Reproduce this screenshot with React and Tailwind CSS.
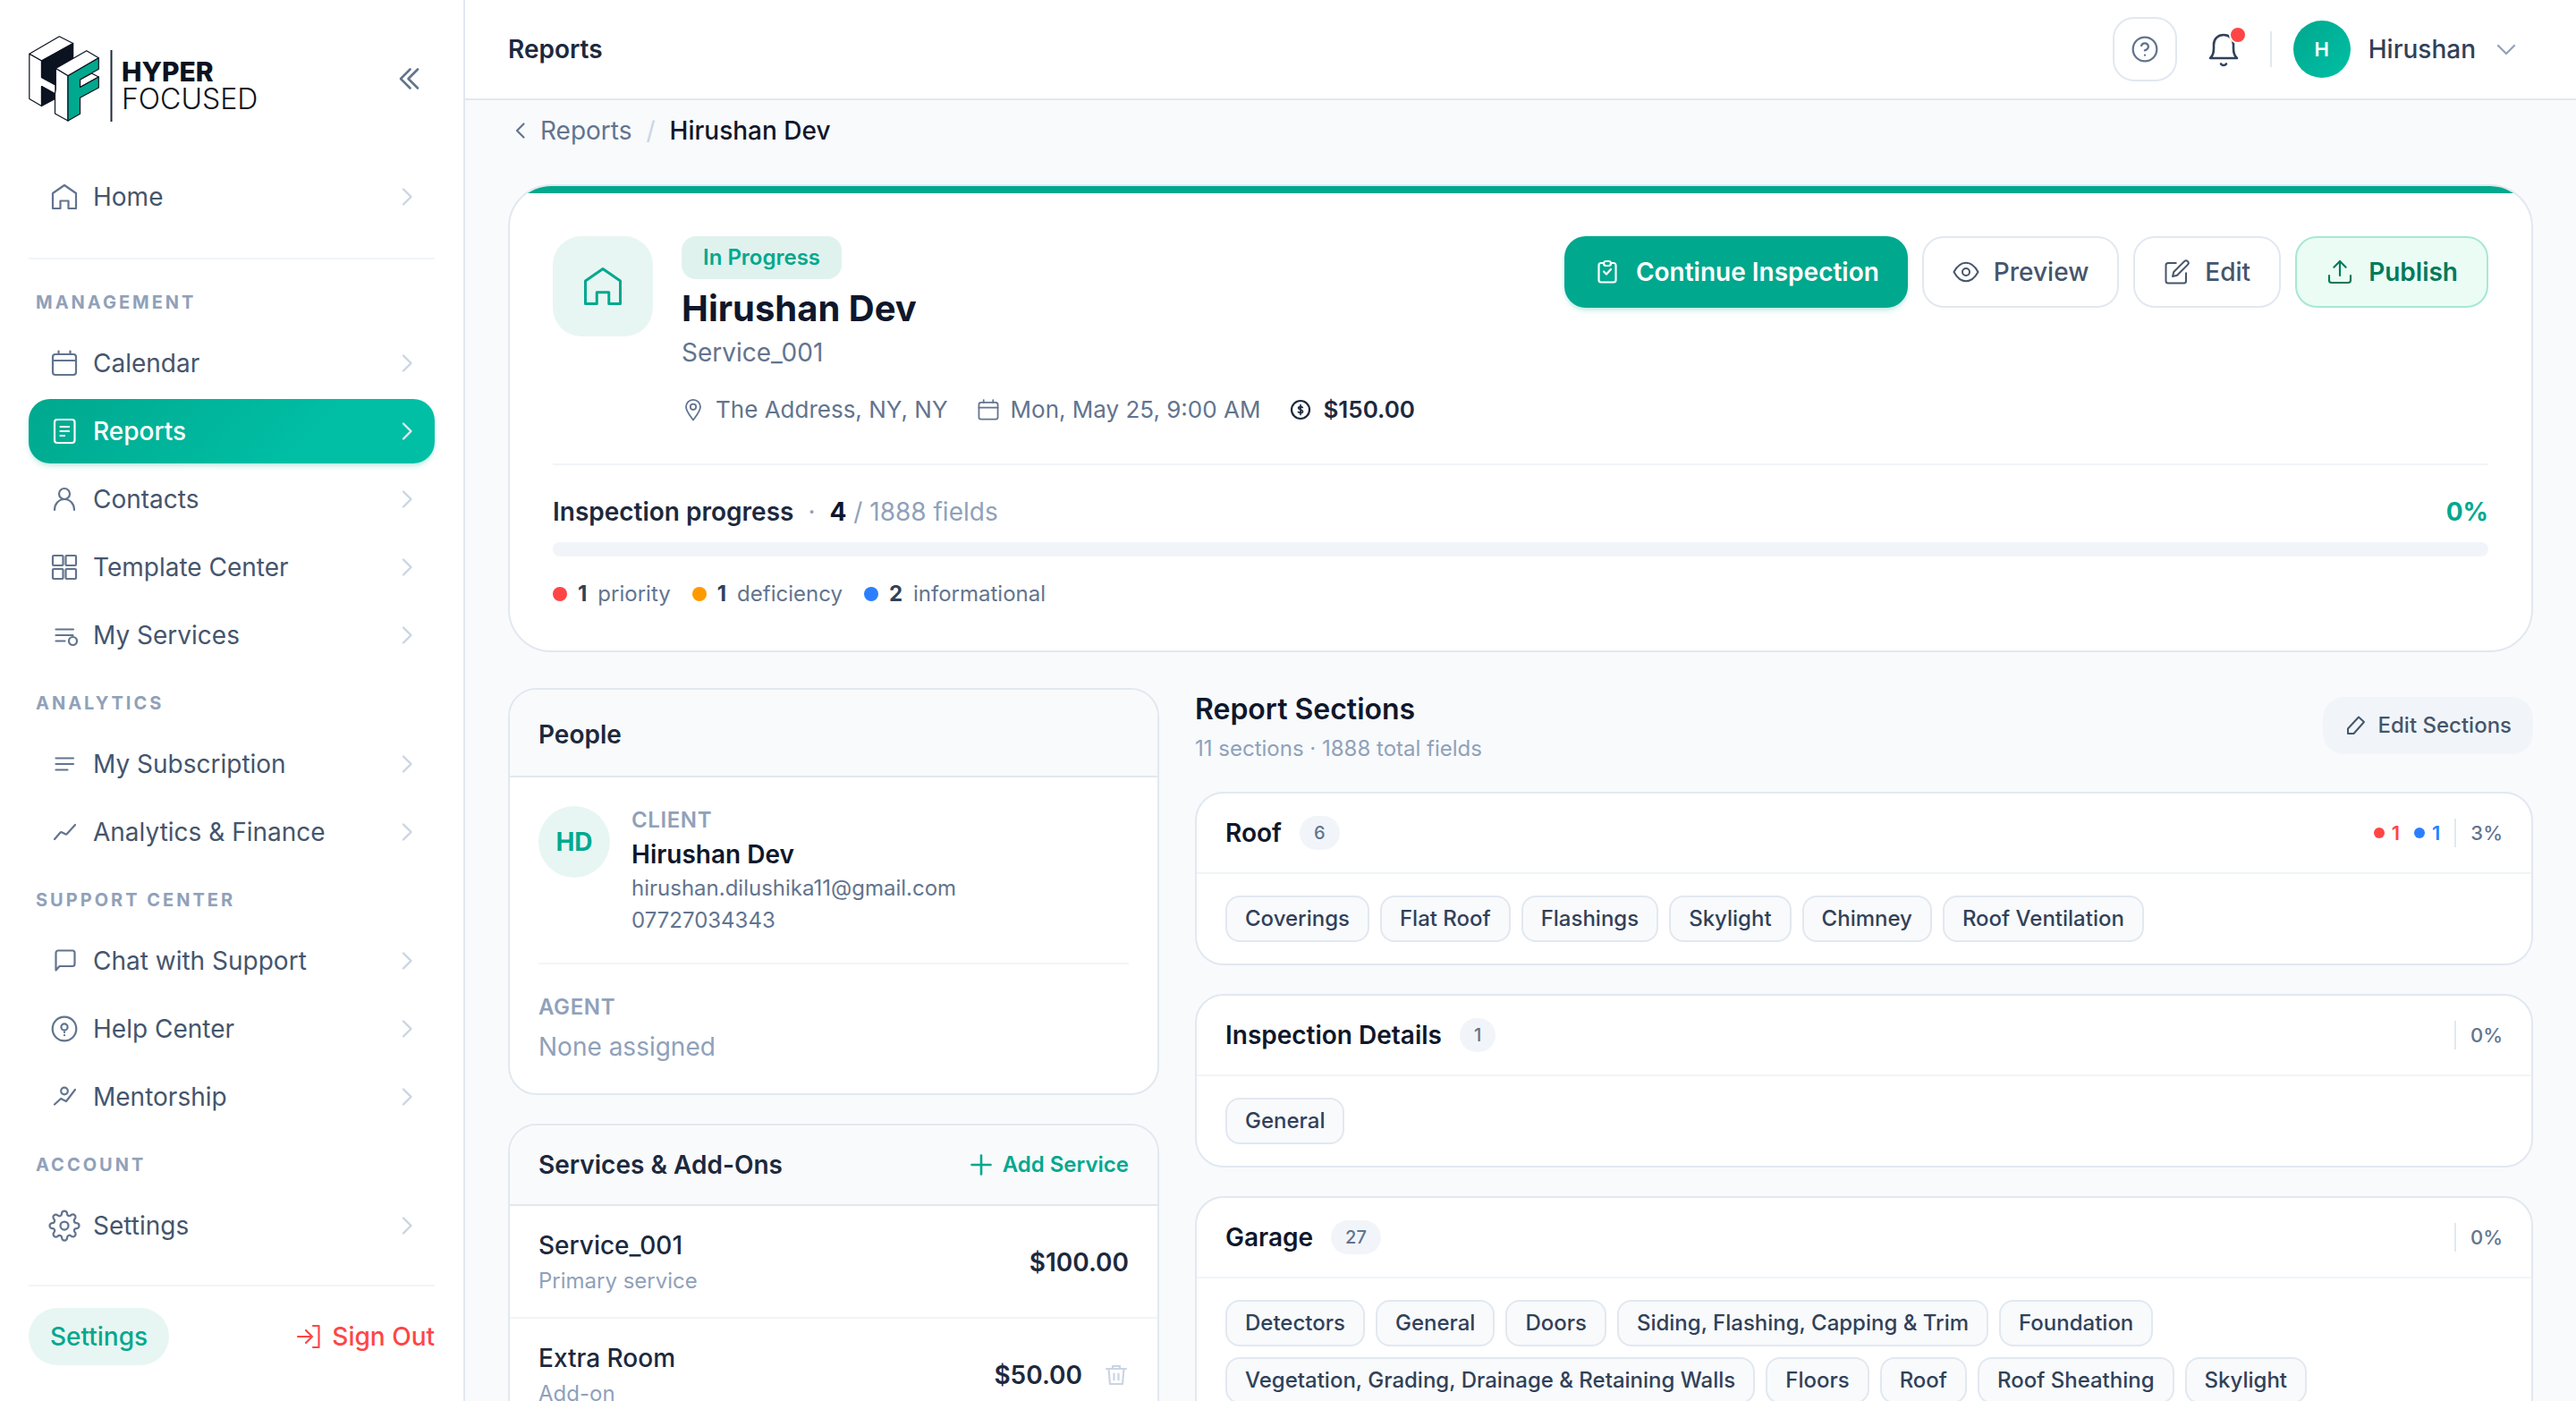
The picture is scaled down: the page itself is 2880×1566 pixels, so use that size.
// App.jsx
import React, { useState } from "react";
import { FiEdit, FiHelpCircle, FiSettings, FiUpload } from "react-icons/fi";

const Icon = ({ children, className = "size-8", box = 32, width = 2.2 }) => (
  <svg
    viewBox={`0 0 ${box} ${box}`}
    className={`shrink-0 ${className}`}
    fill="none"
    stroke="currentColor"
    strokeWidth={width}
    strokeLinecap="round"
    strokeLinejoin="round"
    aria-hidden="true"
  >
    {children}
  </svg>
);

const HomeIcon = ({ className, width }) => (
  <Icon className={className} width={width}>
    <path d="M3 12 16 3l13 9v17h-8.500v-8.500h-9V29H3z" />
  </Icon>
);

const CalendarIcon = ({ className }) => (
  <Icon className={className}>
    <rect x="3" y="6" width="26" height="23" rx="3" />
    <path d="M3 13h26M9.500 2.500V6M22.500 2.500V6" />
  </Icon>
);

const ReportIcon = () => (
  <Icon>
    <rect x="5" y="3" width="22.500" height="26" rx="3" />
    <path d="M11.500 11h9.500M11.500 16h9.500M11.500 21h4.500" />
  </Icon>
);

const ContactIcon = () => (
  <Icon>
    <circle cx="16" cy="10" r="6" />
    <path d="M5 28c0-6.500 4.500-12 11-12s11 5.500 11 12" />
  </Icon>
);

const TemplateIcon = () => (
  <Icon>
    <rect x="3" y="3" width="11.500" height="11" rx="1" />
    <rect x="17.500" y="3" width="11.500" height="11" rx="1" />
    <rect x="3" y="18" width="11.500" height="11" rx="1" />
    <rect x="17.500" y="18" width="11.500" height="11" rx="1" />
  </Icon>
);

const ServicesIcon = () => (
  <Icon>
    <path d="M6.500 9.500h19.500M6.500 16h19M6.500 22.500h10" />
    <circle cx="25.500" cy="22.500" r="4.500" />
  </Icon>
);

const SubscriptionIcon = () => (
  <Icon>
    <path d="M6.500 9.500h19.500M6.500 16h19.500M6.500 22.500h13" />
  </Icon>
);

const AnalyticsIcon = () => (
  <Icon>
    <path d="M5 24l6.500-7.500c.5-.5 1-.6 1.500-.3l4.500 2.300c.5.2 1 .1 1.400-.4L28 8" />
  </Icon>
);

const ChatIcon = () => (
  <Icon>
    <path d="M6.500 26.500V7a2.500 2.500 0 0 1 2.500-2.500h16A2.500 2.500 0 0 1 27.500 7v12.500a2.500 2.500 0 0 1-2.500 2.500H10.500z" />
  </Icon>
);

const HelpIcon = () => (
  <Icon>
    <circle cx="16" cy="16" r="13.300" />
    <circle cx="16" cy="14" r="3.600" />
    <path d="M16 19.500v.5M16 23v.2" />
  </Icon>
);

const MentorIcon = () => (
  <Icon>
    <path d="M5 24.500l7-6.500 6 3 10-13" />
    <circle cx="16" cy="9.500" r="3.800" />
  </Icon>
);

const GearIcon = () => (
  <span className="flex size-8 shrink-0 items-center justify-center">
    <FiSettings className="size-9 shrink-0" strokeWidth={1.5} aria-hidden="true" />
  </span>
);

const Chevron = ({ className }) => (
  <Icon className={className} box={24} width={2.4}>
    <path d="M13 3.500 21.500 12 13 20.500" />
  </Icon>
);

const navGroups = [
  {
    title: "Management",
    items: [
      { label: "Calendar", icon: CalendarIcon },
      { label: "Reports", icon: ReportIcon },
      { label: "Contacts", icon: ContactIcon },
      { label: "Template Center", icon: TemplateIcon },
      { label: "My Services", icon: ServicesIcon },
    ],
  },
  {
    title: "Analytics",
    items: [
      { label: "My Subscription", icon: SubscriptionIcon },
      { label: "Analytics & Finance", icon: AnalyticsIcon },
    ],
  },
  {
    title: "Support Center",
    items: [
      { label: "Chat with Support", icon: ChatIcon },
      { label: "Help Center", icon: HelpIcon },
      { label: "Mentorship", icon: MentorIcon },
    ],
  },
  { title: "Account", items: [{ label: "Settings", icon: GearIcon }] },
];

const stats = [
  { count: 1, label: "priority", color: "bg-[#ff4545]" },
  { count: 1, label: "deficiency", color: "bg-[#ff9900]" },
  { count: 2, label: "informational", color: "bg-[#2b7fff]" },
];

const sections = [
  {
    name: "Roof",
    fields: 6,
    percent: 3,
    priority: 1,
    informational: 1,
    items: ["Coverings", "Flat Roof", "Flashings", "Skylight", "Chimney", "Roof Ventilation"],
  },
  { name: "Inspection Details", fields: 1, percent: 0, items: ["General"] },
  {
    name: "Garage",
    fields: 27,
    percent: 0,
    items: [
      "Detectors",
      "General",
      "Doors",
      "Siding, Flashing, Capping & Trim",
      "Foundation",
      "Vegetation, Grading, Drainage & Retaining Walls",
      "Floors",
      "Roof",
      "Roof Sheathing",
      "Skylight",
    ],
  },
];

const Logo = () => (
  <a href="#home" className="flex items-center" aria-label="Hyper Focused">
    <svg viewBox="0 0 94 96" className="h-24 w-[94px]" fill="none" stroke="#0b1220" strokeWidth="1.200" strokeLinejoin="round" aria-hidden="true">
      <path d="M.8 20.300 34.300.8 49.700 8.500 14.500 28z" fill="#fff" />
      <path d="M.8 20.300V70.500L14.500 78.500V56.500L30 65V55L14.500 46.500V28z" fill="#fff" />
      <path d="M14.500 28 49.700 8.500V25.500L30.300 36.500V55L14.500 46.500z" fill="#0b1220" />
      <path d="M14.500 56.500 29.500 65V70.500L14.500 78.500z" fill="#0b1220" />
      <path d="M30.300 36.500 64.800 16.700 78.300 24.700 44 44.700z" fill="#fff" />
      <path d="M30.300 36.500 44 44.700V95L29.500 87V65L30.300 60z" fill="#fff" />
      <path d="M57.500 49 70.500 42 78.300 46 57.500 57.500z" fill="#fff" />
      <path d="M44 44.700 78.300 24.700V37.300L57.500 49V57.500L78.300 46V58L57.500 69.300V87.300L44 95z" fill="#00a88e" />
      <path d="M92.500 16v80" stroke="#1e293b" strokeWidth="2" />
    </svg>
    <span className="mt-4 ml-2.5 flex flex-col text-[#0b1220]">
      <span className="text-[30px] leading-[30px] font-extrabold">HYPER</span>
      <span className="text-[32px] leading-8 font-light">FOCUSED</span>
    </span>
  </a>
);

const NavItem = ({ label, icon: NavIcon, active, onSelect }) => (
  <a
    href="#nav"
    aria-current={active ? "page" : undefined}
    onClick={(e) => {
      e.preventDefault();
      onSelect(label);
    }}
    className={`flex h-[72px] items-center gap-4 rounded-[24px] px-6 text-[28px] leading-10 ${
      active
        ? "bg-linear-135 from-[#00a88e] to-[#00bfa5] to-70% font-medium text-white shadow-md shadow-[#00a88e]/20"
        : "text-slate-600"
    }`}
  >
    <span className={active ? "text-white" : "text-slate-500"}>
      <NavIcon />
    </span>
    <span className="flex-1">{label}</span>
    <Chevron className={active ? "size-6 text-slate-200" : "size-6 text-slate-300"} />
  </a>
);

const Sidebar = () => {
  const [current, setCurrent] = useState("Reports");

  return (
    <aside className="flex w-[520px] shrink-0 flex-col border-r-2 border-slate-200 bg-white px-8 pt-10 pb-10">
      <div className="flex items-center justify-between">
        <Logo />
        <button type="button" aria-label="Collapse sidebar" className="mr-4 text-slate-500">
          <Icon className="size-7" box={28} width={2.6}>
            <path d="M16.500 3.500 6 14l10.500 10.500M25 3.500 14.500 14 25 24.500" />
          </Icon>
        </button>
      </div>

      <nav className="mt-12 flex flex-col">
        <NavItem label="Home" icon={HomeIcon} active={current === "Home"} onSelect={setCurrent} />
        <hr className="mt-8 mb-2 border-t-2 border-slate-100" />
        {navGroups.map((group) => (
          <div key={group.title}>
            <h2 className="px-2 pt-6 pb-4 text-[20px] leading-8 font-bold tracking-[0.15em] text-slate-400 uppercase">
              {group.title}
            </h2>
            <div className="flex flex-col gap-1">
              {group.items.map((item) => (
                <NavItem
                  key={item.label}
                  label={item.label}
                  icon={item.icon}
                  active={current === item.label}
                  onSelect={setCurrent}
                />
              ))}
            </div>
          </div>
        ))}
      </nav>

      <div className="mt-auto flex items-center justify-between border-t-2 border-slate-100 pt-6 text-[28px]">
        <a href="#settings" className="rounded-full bg-[#e8f6f3] px-6 py-3 leading-10 font-medium text-[#00a88e]">
          Settings
        </a>
        <button type="button" className="flex items-center gap-3 leading-10 font-medium text-[#ff4545]">
          <Icon className="size-7" box={28}>
            <path d="M2 14h16M11 7l7 7-7 7M19 2h6.500v24H19" />
          </Icon>
          Sign Out
        </button>
      </div>
    </aside>
  );
};

const Header = () => (
  <header className="flex shrink-0 items-center justify-between border-b-2 border-slate-200 bg-white px-12 pt-[19px] pb-[19px]">
    <h1 className="text-[28px] leading-10 font-semibold text-slate-800">Reports</h1>
    <div className="flex items-center gap-4">
      <button
        type="button"
        aria-label="Help"
        className="flex size-[72px] items-center justify-center rounded-[24px] border-2 border-slate-200 text-slate-500"
      >
        <FiHelpCircle className="size-8" strokeWidth={1.7} />
      </button>
      <button type="button" aria-label="Notifications" className="relative flex size-[72px] items-center justify-center text-slate-700">
        <Icon className="size-10" box={40} width={2.6}>
          <path d="M5 30h30c-3-2.500-4-6-4-11v-4C31 8.500 26.500 4 20 4S9 8.500 9 15v4c0 5-1 8.500-4 11zM17 36.500c1.600 2 4.400 2 6 0" />
        </Icon>
        <span className="absolute top-2.5 right-2.5 size-5 rounded-full border-2 border-white bg-[#ff4545]" />
      </button>
      <span className="h-10 w-0.5 bg-slate-200" />
      <button type="button" className="flex items-center gap-5 pr-4 pl-2">
        <span className="flex size-16 items-center justify-center rounded-full bg-linear-to-br from-[#00a88e] to-[#00bfa5] text-[22px] font-semibold text-white">
          H
        </span>
        <span className="text-[28px] leading-10 font-medium text-slate-700">Hirushan</span>
        <Icon className="size-7 text-slate-400" box={28}>
          <path d="M5 10l9 9 9-9" />
        </Icon>
      </button>
    </div>
  </header>
);

const actionButton = "flex items-center gap-4 rounded-[24px] px-8 text-[28px] leading-10";

const Hero = () => (
  <section className="overflow-hidden rounded-[48px] border-2 border-slate-200 bg-white">
    <div className="h-2 bg-[#00a88e]" />
    <div className="px-12 pt-12 pb-[43px]">
      <div className="flex items-start justify-between">
        <div className="flex items-start gap-8">
          <div className="flex size-28 items-center justify-center rounded-[32px] bg-[#e8f6f3] text-[#00a88e]">
            <HomeIcon className="size-12" width={2} />
          </div>
          <div>
            <span className="inline-flex rounded-[16px] bg-[#e0f2ee] px-6 text-[24px] leading-[48px] font-semibold text-[#00a88e]">
              In Progress
            </span>
            <h2 className="mt-1 text-[40px] leading-[58px] font-bold text-slate-900">Hirushan Dev</h2>
            <p className="text-[28px] leading-10 text-slate-500">Service_001</p>
            <div className="mt-6 flex items-center gap-8 text-[26px] leading-10 text-slate-500">
              <span className="flex items-center gap-3">
                <Icon className="size-[26px]" box={26} width={1.8}>
                  <path d="M13 24.500C9 19 5 14.500 5 9.800a8 8 0 0 1 16 0C21 14.500 17 19 13 24.500z" />
                  <circle cx="13" cy="9.800" r="3.200" />
                </Icon>
                The Address, NY, NY
              </span>
              <span className="flex items-center gap-3">
                <CalendarIcon className="size-[26px]" />
                Mon, May 25, 9:00 AM
              </span>
              <span className="flex items-center gap-3 font-semibold text-slate-800">
                <Icon className="size-[26px]" box={26}>
                  <circle cx="13" cy="13" r="10" />
                  <path d="M15.200 10.500c-.8-1.200-4.600-1.400-4.600.6 0 2.200 4.900 1.400 4.900 3.800 0 2.100-4.200 2-5 .6M13 7.500v11" strokeWidth="1.700" />
                </Icon>
                $150.00
              </span>
            </div>
          </div>
        </div>

        <div className="flex gap-4">
          <button type="button" className={`${actionButton} bg-[#00a88e] py-5 font-semibold text-white shadow-md shadow-[#00a88e]/20`}>
            <Icon className="size-8" box={32}>
              <path d="M11 6H9a2.500 2.500 0 0 0-2.500 2.500V25A2.500 2.500 0 0 0 9 27.500h14a2.500 2.500 0 0 0 2.500-2.500V8.500A2.500 2.500 0 0 0 23 6h-2M12 15.500l3 3 5-5.500" />
              <rect x="12" y="4" width="8" height="5" rx="2.500" />
            </Icon>
            Continue Inspection
          </button>
          <button type="button" className={`${actionButton} border-2 border-slate-200 bg-white py-[18px] font-medium text-slate-600`}>
            <Icon className="size-[30px]" box={30} width={2}>
              <path d="M1.500 15C5 8.500 9.500 4.800 15 4.800S25 8.500 28.500 15C25 21.500 20.500 25.200 15 25.200S5 21.500 1.500 15z" />
              <circle cx="15" cy="15" r="4" />
            </Icon>
            Preview
          </button>
          <button type="button" className={`${actionButton} border-2 border-slate-200 bg-white py-[18px] font-medium text-slate-600`}>
            <FiEdit className="size-[30px]" strokeWidth={1.6} />
            Edit
          </button>
          <button type="button" className={`${actionButton} border-2 border-[#a7e8d2] bg-[#ebfcf5] py-[18px] font-semibold text-[#007a5a]`}>
            <FiUpload className="size-8" strokeWidth={1.6} />
            Publish
          </button>
        </div>
      </div>

      <div className="mt-10 border-t-2 border-slate-100 pt-8">
        <div className="flex items-center justify-between text-[28px] leading-10">
          <p className="flex items-center gap-4 text-slate-400">
            <span className="font-semibold text-slate-800">Inspection progress</span>
            <span>·</span>
            <span>
              <strong className="font-bold text-slate-900">4</strong> / 1888 fields
            </span>
          </p>
          <span className="font-bold text-[#00a88e]">0%</span>
        </div>
        <div className="mt-3.5 h-4 rounded-full bg-slate-100" />
        <div className="mt-[22px] flex gap-6 text-[24px] leading-10">
          {stats.map((stat) => (
            <span key={stat.label} className="flex items-center gap-3 text-slate-500">
              <span className={`size-4 rounded-full ${stat.color}`} />
              <strong className="font-bold text-slate-700">{stat.count}</strong>
              {stat.label}
            </span>
          ))}
        </div>
      </div>
    </div>
  </section>
);

const PeopleCard = () => (
  <section className="overflow-hidden rounded-[32px] border-2 border-slate-200 bg-white">
    <h2 className="border-b-2 border-slate-200 bg-slate-50 px-8 pt-[30px] pb-[26px] text-[28px] leading-10 font-semibold text-slate-800">
      People
    </h2>
    <div className="p-8">
      <div className="flex gap-6">
        <span className="flex size-20 items-center justify-center rounded-full bg-[#e8f6f3] text-[28px] font-bold text-[#00a88e]">
          HD
        </span>
        <div>
          <p className="text-[24px] leading-8 font-semibold tracking-wide text-slate-400">CLIENT</p>
          <p className="mt-0.5 text-[28px] leading-10 font-semibold text-slate-900">Hirushan Dev</p>
          <p className="text-[24px] leading-9 text-slate-500">hirushan.dilushika11@gmail.com</p>
          <p className="text-[24px] leading-9 text-slate-500">07727034343</p>
        </div>
      </div>
      <div className="mt-[29px] border-t-2 border-slate-100 pt-8">
        <p className="text-[24px] leading-8 font-semibold tracking-wide text-slate-400">AGENT</p>
        <p className="mt-2 text-[28px] leading-10 text-slate-400">None assigned</p>
      </div>
    </div>
  </section>
);

const ServicesCard = () => (
  <section className="overflow-hidden rounded-[32px] border-2 border-slate-200 bg-white">
    <div className="flex items-center justify-between border-b-2 border-slate-200 bg-slate-50 px-8 py-6">
      <h2 className="text-[28px] leading-10 font-semibold text-slate-800">Services &amp; Add-Ons</h2>
      <button type="button" className="flex items-center gap-2.5 text-[24px] leading-9 font-semibold text-[#00a88e]">
        <Icon className="size-7" box={28} width={2.6}>
          <path d="M14 3.500v21M3.500 14h21" />
        </Icon>
        Add Service
      </button>
    </div>
    <div className="flex items-center justify-between border-b-2 border-slate-100 px-8 pt-6 pb-[22px]">
      <div>
        <p className="text-[28px] leading-10 font-medium text-slate-800">Service_001</p>
        <p className="mt-0.5 text-[24px] leading-9 text-slate-400">Primary service</p>
      </div>
      <span className="text-[28px] font-semibold text-slate-800">$100.00</span>
    </div>
    <div className="flex items-center justify-between px-8 pt-6 pb-[22px]">
      <div>
        <p className="text-[28px] leading-10 font-medium text-slate-800">Extra Room</p>
        <p className="mt-0.5 text-[24px] leading-9 text-slate-400">Add-on</p>
      </div>
      <div className="flex items-center gap-6">
        <span className="text-[28px] font-semibold text-slate-800">$50.00</span>
        <button type="button" aria-label="Remove Extra Room" className="text-slate-300">
          <Icon className="size-7" box={28}>
            <path d="M3 7h22M10 6.500V4h8v2.500M5.500 7l1.500 17h14l1.500-17M11.500 12.500v7M16.500 12.500v7" />
          </Icon>
        </button>
      </div>
    </div>
  </section>
);

const SectionCard = ({ section }) => (
  <section className="rounded-[32px] border-2 border-slate-200 bg-white">
    <div className="flex items-center justify-between border-b-2 border-slate-100 px-8 py-6">
      <div className="flex items-center gap-5">
        <h3 className="text-[28px] leading-10 font-semibold text-slate-900">{section.name}</h3>
        <span className="rounded-full bg-slate-100 px-4 text-[20px] leading-[38px] font-medium text-slate-500">
          {section.fields}
        </span>
      </div>
      <div className="flex items-center gap-4 text-[22px] leading-8 font-medium">
        {section.priority && (
          <span className="flex items-center gap-2 font-semibold text-[#ff4545]">
            <span className="size-3 rounded-full bg-[#ff4545]" />
            {section.priority}
          </span>
        )}
        {section.informational && (
          <span className="flex items-center gap-2 font-semibold text-[#2b7fff]">
            <span className="size-3 rounded-full bg-[#2b7fff]" />
            {section.informational}
          </span>
        )}
        <span className="border-l-2 border-slate-200 pl-4 text-slate-500">{section.percent}%</span>
      </div>
    </div>
    <ul className="flex flex-wrap gap-3 px-8 py-6">
      {section.items.map((item) => (
        <li
          key={item}
          className="rounded-[16px] border-2 border-slate-200 bg-slate-50 px-5 text-[24px] leading-[48px] font-medium text-slate-700"
        >
          {item}
        </li>
      ))}
    </ul>
  </section>
);

const App = () => {
  return (
    <div className="flex h-screen overflow-hidden bg-slate-50 font-[Inter,sans-serif]">
      <Sidebar />
      <div className="flex min-w-0 flex-1 flex-col">
        <Header />
        <main className="flex-1 overflow-y-auto px-12 pt-3.5 pb-12 [scrollbar-width:none]">
          <nav aria-label="Breadcrumb" className="mb-10 flex items-center gap-4 text-[28px] leading-10">
            <a href="#reports" className="flex items-center gap-2 text-slate-500">
              <Icon className="size-7" box={28}>
                <path d="M17.500 6.500 10 14l7.500 7.500" />
              </Icon>
              Reports
            </a>
            <span className="text-slate-300">/</span>
            <span className="font-medium text-slate-900">Hirushan Dev</span>
          </nav>

          <Hero />

          <div className="mt-10 grid grid-cols-12 items-start gap-10">
            <div className="col-span-4 flex flex-col gap-8">
              <PeopleCard />
              <ServicesCard />
            </div>
            <div className="col-span-8 flex flex-col gap-8">
              <div className="flex items-center justify-between">
                <div>
                  <h2 className="text-[32px] leading-[48px] font-semibold text-slate-900">Report Sections</h2>
                  <p className="mt-1 text-[24px] leading-8 text-slate-400">11 sections · 1888 total fields</p>
                </div>
                <button
                  type="button"
                  className="flex items-center gap-3 rounded-[24px] bg-slate-100 px-6 text-[24px] leading-[64px] font-medium text-slate-600"
                >
                  <Icon className="size-[26px]" box={26} width={2}>
                    <path d="M4 22v-5.500L16 3.500l6 5.500L10.500 22z" />
                  </Icon>
                  Edit Sections
                </button>
              </div>
              {sections.map((section) => (
                <SectionCard key={section.name} section={section} />
              ))}
            </div>
          </div>
        </main>
      </div>
    </div>
  );
};

export default App;
